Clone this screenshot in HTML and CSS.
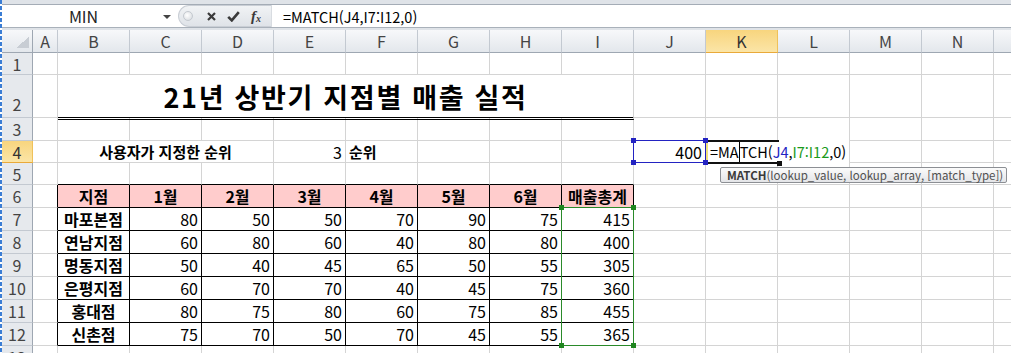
FILE: index.html
```html
<!doctype html>
<html lang="ko">
<head>
  <meta charset="utf-8">
  <title>21년 상반기 지점별 매출 실적</title>
  <meta name="viewport" content="width=device-width, initial-scale=1">
  <link rel="stylesheet" href="styles.css">
</head>
<body>
<div class="excel">
  <div class="formula-bar">
    <div class="fb-row">
      <div class="name-box">
        <span class="name">MIN</span>
        <span class="drop"></span>
      </div>
      <div class="fx-tools">
        <span class="grip"></span>
        <svg class="tool" width="9" height="9" viewBox="0 0 9 9"><path d="M1 1l7 7M8 1L1 8" stroke="#3a3a3a" stroke-width="2.2" fill="none"/></svg>
        <svg class="tool" width="13" height="11" viewBox="0 0 13 11"><path d="M1.2 5.8l3.6 3.6L11.8 1.2" stroke="#3a3a3a" stroke-width="2.6" fill="none"/></svg>
        <span class="fx">f<sub>x</sub></span>
      </div>
      <div class="formula">=MATCH(J4,I7:I12,0)</div>
    </div>
  </div>

  <div class="sheet" id="sheet">
    <!-- 병합된 셀 -->
    <div class="title">21년 상반기 지점별 매출 실적</div>
    <div class="label">사용자가 지정한 순위</div>

    <!-- 수식 참조 범위 표시 -->
    <div class="ref ref-blue"><i class="k tl"></i><i class="k tr"></i><i class="k bl"></i><i class="k br"></i></div>
    <div class="ref ref-green"><i class="k tl"></i><i class="k tr"></i><i class="k bl"></i><i class="k br"></i></div>

    <!-- K4 편집 중 -->
    <div class="editor">
      <span class="frame"><i class="handle"></i></span>
      <span>=MA<span class="caret"></span>TCH(<span class="c-blue">J4</span>,<span class="c-green">I7:I12</span>,0)</span>
    </div>

    <div class="tip"><b>MATCH</b>(lookup_value, lookup_array, [match_type])</div>
  </div>
</div>

<script>
  (function () {
    var sheet = document.getElementById("sheet");
    var letters = "ABCDEFGHIJKLMNO".split("");

    // 표 데이터 (B6:I12)
    var table = [
      ["지점", "1월", "2월", "3월", "4월", "5월", "6월", "매출총계"],
      ["마포본점", 80, 50, 50, 70, 90, 75, 415],
      ["연남지점", 60, 80, 60, 40, 80, 80, 400],
      ["명동지점", 50, 40, 45, 65, 50, 55, 305],
      ["은평지점", 60, 70, 70, 40, 45, 75, 360],
      ["홍대점", 80, 75, 80, 60, 75, 85, 455],
      ["신촌점", 75, 70, 50, 70, 45, 55, 365]
    ];

    var values = {
      E4: { text: "3", cls: "num" },
      F4: { text: "순위", cls: "bold" },
      J4: { text: "400", cls: "num" }
    };
    table.forEach(function (row, i) {
      row.forEach(function (v, j) {
        var cls = i === 0 ? "th" : (j === 0 ? "branch" : "num");
        values[letters[j + 1] + (6 + i)] = { text: v, cls: cls };
      });
    });

    // 병합 셀이 덮는 칸
    var covered = ["B2", "C2", "D2", "E2", "F2", "G2", "H2", "I2", "B4", "C4", "D4"];

    function make(cls, text, row, col) {
      var d = document.createElement("div");
      d.className = cls;
      if (text !== undefined && text !== "") d.textContent = text;
      d.style.gridArea = row + " / " + col;
      sheet.appendChild(d);
      return d;
    }

    make("hd corner", "", 1, 1);
    letters.forEach(function (l, j) {
      // O열은 화면 밖으로 잘려서 글자가 보이지 않음
      make("hd" + (l === "K" ? " hl" : ""), l === "O" ? "" : l, 1, j + 2);
    });

    for (var r = 1; r <= 13; r++) {
      make("rh" + (r === 4 ? " hl" : "") + (r === 2 ? " low" : ""), r, r + 1, 1);
      letters.forEach(function (l, j) {
        var addr = l + r;
        if (covered.indexOf(addr) >= 0) return;
        var v = values[addr] || {};
        var cls = "c " + (v.cls || "");
        var inTable = j >= 1 && j <= 8;
        if (r >= 6 && r <= 12 && inTable) cls += " tb";
        if (r === 5 && inTable) cls += " tb-b";
        if (r >= 6 && r <= 12 && j === 0) cls += " tb-r";
        make(cls, v.text, r + 1, j + 2);
      });
    }
  })();
</script>
</body>
</html>
```

FILE: styles.css
```css
* {
  margin: 0;
  padding: 0;
  box-sizing: border-box;
}
body {
  font-family: "Noto Sans CJK KR", "Noto Sans", sans-serif;
  background: #fff;
  color: #000;
  overflow: hidden;
}
.excel {
  width: 1011px;
  height: 353px;
  padding-left: 2px;
  overflow: hidden;
  background: repeating-linear-gradient(#3b7dd4 0 4px, transparent 4px 6px) 0 0 / 2px 100% no-repeat;
}

/* 수식 입력줄 */
.formula-bar {
  height: 30px;
  padding: 4px 0 2px;
  background: #dfe3e8;
}
.fb-row {
  display: flex;
  height: 24px;
  background: #fff;
  border-top: 1px solid #a4acb6;
  border-bottom: 1px solid #a9b1ba;
}
.name-box {
  width: 175px;
  display: flex;
  align-items: center;
}
.name-box .name {
  flex: 1;
  text-align: center;
  font-size: 16px;
  color: #222;
  padding-left: 2px;
}
.name-box .drop {
  width: 0;
  height: 0;
  border-left: 4px solid transparent;
  border-right: 4px solid transparent;
  border-top: 4px solid #444;
  margin: 2px 6px 0 0;
}
.fx-tools {
  width: 93px;
  display: flex;
  align-items: center;
  margin: 0 0 0 1px;
  border-radius: 11px 0 0 11px;
  background: linear-gradient(#f1f3f5, #dfe3e8);
  border: 1px solid #c9ced5;
  border-right: none;
}
.fx-tools .grip {
  width: 10px;
  height: 10px;
  border-radius: 50%;
  margin-left: 4px;
  background: radial-gradient(circle at 40% 40%, #fff, #d3d7dc);
  border: 1px solid #c4c9cf;
}
.fx-tools .tool {
  margin-left: 14px;
}
.fx-tools .tool + .tool {
  margin-left: 11px;
}
.fx {
  margin-left: 11px;
  font-family: "Liberation Serif", serif;
  font-style: italic;
  font-weight: 700;
  font-size: 15px;
  color: #3a3a3a;
  line-height: 1;
}
.fx sub {
  font-size: 10px;
  vertical-align: -1px;
}
.formula {
  flex: 1;
  display: flex;
  align-items: center;
  padding-left: 11px;
  font-size: 14.5px;
  border-left: 1px solid #d8dce1;
}

/* 시트 */
.sheet {
  position: relative;
  display: grid;
  grid-template-columns: 31px 25px repeat(14, 72px);
  grid-template-rows: 23px 22px 43px 23px 22px 22px repeat(7, 23px) 23px;
  width: 1009px;
  height: 323px;
  overflow: hidden;
}
.hd, .rh {
  display: flex;
  align-items: center;
  justify-content: center;
  font-size: 16px;
  color: #444;
  white-space: nowrap;
}
.hd {
  background: linear-gradient(#f7f8fa, #e3e7ec);
  border-right: 1px solid #c3c9d1;
  border-bottom: 1px solid #9ea7b2;
}
.hd.corner {
  background:
    linear-gradient(to top left, #c8cdd4 50%, transparent 50%) right 3px bottom 4px / 13px 11px no-repeat,
    linear-gradient(#f7f8fa, #e3e7ec);
  border-right-color: #9ea7b2;
}
.rh {
  background: #e6e9ed;
  border-right: 1px solid #9ea7b2;
  border-bottom: 1px solid #c3c9d1;
}
.rh.low {
  align-items: flex-end;
  padding-bottom: 1px;
}
.hd.hl, .rh.hl {
  background: linear-gradient(#f8d57e, #fbe5a7);
  color: #333;
  border-right-color: #efc15a;
  border-bottom-color: #e9a93a;
}

.c {
  display: flex;
  align-items: center;
  padding: 0 3px;
  font-size: 16px;
  white-space: nowrap;
  overflow: hidden;
  border-right: 1px solid #d4d4d4;
  border-bottom: 1px solid #d4d4d4;
}
.num {
  justify-content: flex-end;
}
.bold {
  font-weight: 700;
  font-size: 15px;
}
.th {
  justify-content: center;
  font-weight: 700;
  background: #ffcccc;
}
.branch {
  justify-content: center;
  font-weight: 700;
}
.tb {
  border-right-color: #000;
  border-bottom-color: #000;
}
.tb-b {
  border-bottom-color: #000;
}
.tb-r {
  border-right-color: #000;
}

.title {
  grid-area: 3 / 3 / 4 / 11;
  position: relative;
  z-index: 1;
  display: flex;
  align-items: center;
  justify-content: center;
  margin-bottom: -2px;
  font-size: 27px;
  font-weight: 700;
  letter-spacing: 1.7px;
  border-right: 1px solid #d4d4d4;
  border-bottom: 3px double #000;
}
.label {
  grid-area: 5 / 3 / 6 / 6;
  display: flex;
  align-items: center;
  justify-content: center;
  font-size: 15px;
  font-weight: 700;
  border-right: 1px solid #d4d4d4;
  border-bottom: 1px solid #d4d4d4;
}

/* 참조 범위 */
.ref {
  position: relative;
  z-index: 3;
  margin: -1px 0 0 -1px;
}
.ref-blue {
  grid-area: 5 / 11;
  border: 1px solid #2323c2;
}
.ref-green {
  grid-area: 8 / 10 / 14 / 11;
  border: 1px solid #2a8a2a;
}
.k {
  position: absolute;
  width: 5px;
  height: 5px;
}
.ref-blue .k { background: #2323c2; }
.ref-green .k { background: #1f861f; }
.k.tl { left: -3px; top: -3px; }
.k.tr { right: -3px; top: -3px; }
.k.bl { left: -3px; bottom: -3px; }
.k.br { right: -3px; bottom: -3px; }

/* 셀 편집 */
.editor {
  grid-area: 5 / 12 / 6 / 14;
  position: relative;
  z-index: 2;
  display: flex;
  align-items: center;
  margin: -1px 1px 0 0;
  padding-left: 4px;
  background: #fff;
  font-size: 14.5px;
  white-space: nowrap;
}
.editor .frame {
  position: absolute;
  left: 0;
  top: 0;
  bottom: -1px;
  width: 73px;
  border-top: 2px solid #111;
  border-bottom: 2px solid #111;
  border-left: 2px solid #efe27a;
}
.editor .handle {
  position: absolute;
  right: -3px;
  bottom: -4px;
  width: 5px;
  height: 5px;
  background: #111;
}
.caret {
  display: inline-block;
  width: 1px;
  height: 21px;
  background: #000;
  vertical-align: -5px;
}
.c-blue { color: #2323c2; }
.c-green { color: #1a9a1a; }

.tip {
  position: absolute;
  left: 718px;
  top: 137px;
  z-index: 4;
  width: 287px;
  height: 16px;
  padding-left: 6px;
  font-size: 11.5px;
  line-height: 14px;
  color: #505050;
  white-space: nowrap;
  background: linear-gradient(#fbfbfb, #e4e5e8);
  border: 1px solid #8c8f94;
  border-radius: 2px;
}
.tip b {
  color: #3a3a3a;
}
```
